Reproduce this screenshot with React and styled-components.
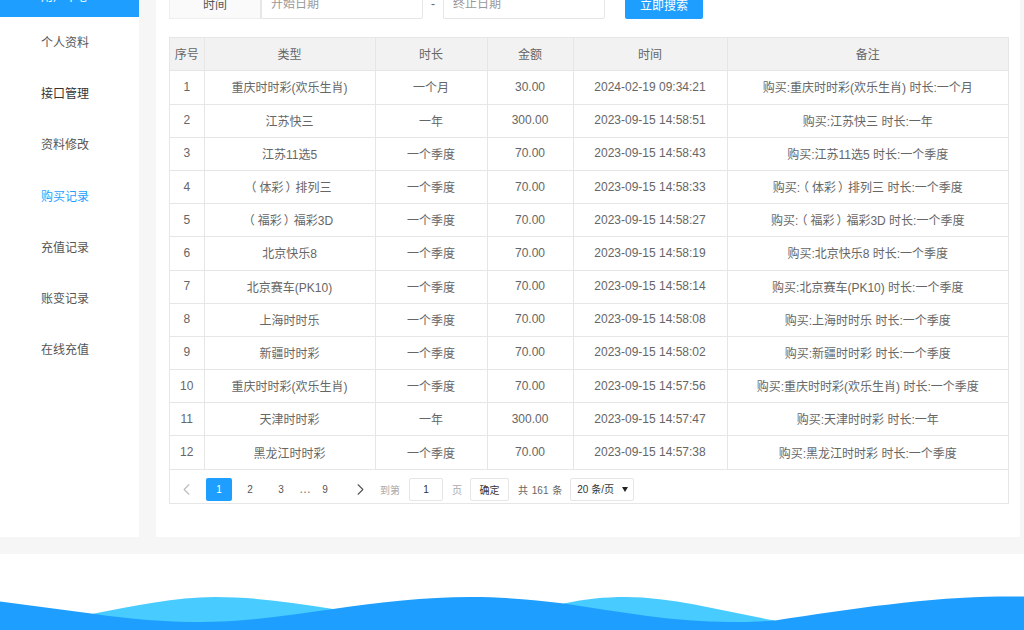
import React from 'react'
import styled, { createGlobalStyle } from 'styled-components'
import { ChevronLeft, ChevronRight } from 'lucide-react'

const GlobalStyle = createGlobalStyle`
  html, body {
    margin: 0;
    height: 630px;
    overflow: hidden;
    background: #fff;
    font-family: "Liberation Sans", "Noto Sans CJK SC", sans-serif;
    font-size: 12px;
    color: #666;
  }
  * { box-sizing: border-box; }
`

const menu = ['个人资料', '接口管理', '资料修改', '购买记录', '充值记录', '账变记录', '在线充值']

const rows = [
  ['重庆时时彩(欢乐生肖)', '一个月', '30.00', '2024-02-19 09:34:21'],
  ['江苏快三', '一年', '300.00', '2023-09-15 14:58:51'],
  ['江苏11选5', '一个季度', '70.00', '2023-09-15 14:58:43'],
  [<><Paren>（</Paren>体彩<Paren $close>）</Paren>排列三</>, '一个季度', '70.00', '2023-09-15 14:58:33'],
  [<><Paren>（</Paren>福彩<Paren $close>）</Paren>福彩3D</>, '一个季度', '70.00', '2023-09-15 14:58:27'],
  ['北京快乐8', '一个季度', '70.00', '2023-09-15 14:58:19'],
  ['北京赛车(PK10)', '一个季度', '70.00', '2023-09-15 14:58:14'],
  ['上海时时乐', '一个季度', '70.00', '2023-09-15 14:58:08'],
  ['新疆时时彩', '一个季度', '70.00', '2023-09-15 14:58:02'],
  ['重庆时时彩(欢乐生肖)', '一个季度', '70.00', '2023-09-15 14:57:56'],
  ['天津时时彩', '一年', '300.00', '2023-09-15 14:57:47'],
  ['黑龙江时时彩', '一个季度', '70.00', '2023-09-15 14:57:38'],
]

function App() {
  return (
    <>
      <GlobalStyle />
      <Page>
        <Sidebar>
          <MenuHead>用户中心</MenuHead>
          {menu.map((m, i) => (
            <MenuItem key={m} $active={i === 3} $dark={i === 1}>{m}</MenuItem>
          ))}
        </Sidebar>
        <Main>
          <SearchForm>
            <FormLabel>时间</FormLabel>
            <DateInput placeholder="开始日期" />
            <Dash>-</Dash>
            <DateInput placeholder="终止日期" />
            <SearchButton>立即搜索</SearchButton>
          </SearchForm>

          <TableBox>
            <Table>
              <colgroup>
                <col width="34" />
                <col width="171" />
                <col width="112" />
                <col width="86" />
                <col width="154" />
                <col />
              </colgroup>
              <thead>
                <tr>
                  <Th>序号</Th>
                  <Th>类型</Th>
                  <Th>时长</Th>
                  <Th>金额</Th>
                  <Th>时间</Th>
                  <Th>备注</Th>
                </tr>
              </thead>
              <tbody>
                {rows.map((r, i) => (
                  <tr key={i}>
                    <Td>{i + 1}</Td>
                    <Td>{r[0]}</Td>
                    <Td>{r[1]}</Td>
                    <Td>{r[2]}</Td>
                    <Td>{r[3]}</Td>
                    <Td>购买:{r[0]} 时长:{r[1]}</Td>
                  </tr>
                ))}
              </tbody>
            </Table>
            <Pager>
              <PageArrow $off><ChevronLeft size={19} strokeWidth={1.4} /></PageArrow>
              <PageNum $current>1</PageNum>
              <PageNum>2</PageNum>
              <PageNum>3</PageNum>
              <Dots>…</Dots>
              <PageNum>9</PageNum>
              <PageArrow $next><ChevronRight size={19} strokeWidth={1.4} /></PageArrow>
              <PagerText>到第</PagerText>
              <PageInput defaultValue="1" />
              <PagerText>页</PagerText>
              <ConfirmButton>确定</ConfirmButton>
              <Total>共 161 条</Total>
              <SizeSelect>20 条/页<Caret /></SizeSelect>
            </Pager>
          </TableBox>
        </Main>
      </Page>
      <Footer>
        <svg width="1024" height="34" viewBox="0 596 1024 34" style={{ display: 'block' }}>
          <path
            d="M93 613.7C135 606 175 597 215 597C255 597 295 603 333 609L333 630L93 630Z"
            fill="#48cbff"
          />
          <path
            d="M564 603.5C585 599 605 597 625 597C675 597 725 612 775 620.5L775 630L564 630Z"
            fill="#48cbff"
          />
          <path
            d="M0 601.5L93 613.7C130 619 165 622 200 622C245 622 290 615 333 609C380 602 425 597 470 597C505 597 535 600 564 603.5C620 612 675 622 730 622C745 622 760 621.5 775 620.5C850 609 930 597 1000 596.5L1024 596.5L1024 630L0 630Z"
            fill="#1e9fff"
          />
        </svg>
      </Footer>
    </>
  )
}
export default App

function Paren({ children, $close }) {
  return <ParenMark $close={$close}>{children}</ParenMark>
}

// the full-width brackets sit nearer the middle of their box in the original font
const ParenMark = styled.span`
  display: inline-block;
  margin: ${p => (p.$close ? '0 -2px 0 2px' : '0 3px 0 -3px')};
`

const Page = styled.div`
  display: flex;
  margin-top: -34px;
  height: 588px;
  background: #f6f6f6;
  padding: 0 4px 17px 0;
`

const Sidebar = styled.div`
  width: 139px;
  flex: none;
  background: #fff;
`

const MenuHead = styled.div`
  height: 51px;
  padding-left: 41px;
  line-height: 62px;
  color: #fff;
  background: #1e9fff;
`

const MenuItem = styled.div`
  height: 51.2px;
  line-height: 53px;
  padding-left: 41px;
  color: ${p => (p.$active ? '#1e9fff' : p.$dark ? '#333' : '#555')};
`

const Main = styled.div`
  flex: 1;
  margin-left: 17px;
  padding: 15px 11px 0 13px;
  background: #fff;
`

const SearchForm = styled.div`
  display: flex;
  height: 38px;
  margin-bottom: 18px;
`

const FormLabel = styled.div`
  width: 92px;
  line-height: 46px;
  text-align: center;
  font-size: 12px;
  color: #555;
  background: #fafafa;
  border: 1px solid #eee;
  border-right: 1px solid #e6e6e6;
`

const DateInput = styled.input`
  width: 162px;
  height: 38px;
  padding: 8px 0 0 9px;
  font: inherit;
  background: #fff;
  border: 1px solid #e6e6e6;
  border-radius: 0 2px 2px 0;
  outline: none;
  &::placeholder { color: #999; }
`

const Dash = styled.div`
  width: 20px;
  line-height: 46px;
  text-align: center;
`

const SearchButton = styled.button`
  width: 78px;
  height: 38px;
  margin-left: 20px;
  padding: 8px 0 0;
  border: none;
  border-radius: 2px;
  font: inherit;
  color: #fff;
  background: #1e9fff;
`

const TableBox = styled.div`
  border: 1px solid #e6e6e6;
  border-top: none;
  width: 840px;
`

const Table = styled.table`
  width: 100%;
  table-layout: fixed;
  border-collapse: collapse;
  font-size: 12px;
`

const Th = styled.th`
  height: 33.4px;
  padding: 0 0 2px;
  font-weight: 400;
  color: #666;
  background: #f2f2f2;
  border: 1px solid #e6e6e6;
  border-width: 1px 0 1px 1px;
  &:first-child {
    border-left: none;
    box-shadow: 2px 0 5px rgba(0, 0, 0, 0.12);
    position: relative;
  }
`

const Td = styled.td`
  height: 33.2px;
  padding: 0 0 1px;
  text-align: center;
  color: #666;
  border-top: 1px solid #e6e6e6;
  border-bottom: 1px solid #e6e6e6;
  border-left: 1px solid #e6e6e6;
  &:first-child {
    border-left: none;
    box-shadow: 2px 0 5px rgba(0, 0, 0, 0.1);
    position: relative;
  }
`

const Pager = styled.div`
  display: flex;
  align-items: center;
  gap: 5px;
  height: 33px;
  padding: 6px 0 0 3px;
  color: #666;
`

const PageArrow = styled.div`
  width: ${p => (p.$next ? 34 : 26)}px;
  margin-right: ${p => (p.$next ? -2 : 2)}px;
  display: flex;
  justify-content: center;
  color: ${p => (p.$off ? '#bbb' : '#555')};
`

const PageNum = styled.div`
  width: 26px;
  height: 23px;
  line-height: 23px;
  text-align: center;
  font-size: 10px;
  border-radius: 2px;
  color: ${p => (p.$current ? '#fff' : '#555')};
  background: ${p => (p.$current ? '#1e9fff' : 'transparent')};
`

const Dots = styled.div`
  width: 8px;
  text-align: center;
  color: #777;
`

const PagerText = styled.div`
  font-size: 10px;
  color: #aaa;
`

const PageInput = styled.input`
  width: 34px;
  height: 23px;
  margin: 0 4px;
  padding: 0;
  text-align: center;
  font-family: inherit;
  font-size: 10px;
  color: #333;
  border: 1px solid #e6e6e6;
  border-radius: 2px;
  outline: none;
`

const ConfirmButton = styled.button`
  width: 39px;
  height: 23px;
  margin-left: 3px;
  padding: 0;
  font-family: inherit;
  font-size: 10px;
  color: #333;
  background: #fff;
  border: 1px solid #e6e6e6;
  border-radius: 2px;
`

const Total = styled.div`
  margin-left: 4px;
  font-size: 10px;
  word-spacing: 1px;
  color: #666;
`

const SizeSelect = styled.div`
  position: relative;
  width: 64px;
  height: 23px;
  margin-left: 3px;
  padding-left: 6px;
  line-height: 22px;
  font-size: 10px;
  color: #333;
  border: 1px solid #e6e6e6;
  border-radius: 2px;
`

const Caret = styled.span`
  position: absolute;
  right: 5px;
  top: 8px;
  border-style: solid;
  border-width: 5px 3px 0;
  border-color: #222 transparent transparent;
`

const Footer = styled.div`
  height: 76px;
  padding-top: 42px;
  background: #fff;
`
